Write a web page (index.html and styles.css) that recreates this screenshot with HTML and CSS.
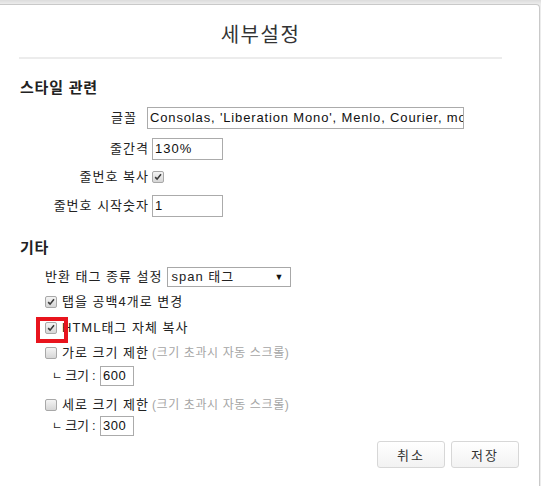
FILE: index.html
```html
<!DOCTYPE html>
<html lang="ko">
<head>
<meta charset="utf-8">
<title>세부설정</title>
<link rel="stylesheet" href="styles.css">
</head>
<body>
<div class="dialog">
  <div class="inner">
    <h1 class="title">세부설정</h1>
    <div class="rule"></div>

    <h2 class="heading">스타일 관련</h2>
    <div class="row row-font">
      <span class="label label-font">글꼴</span>
      <span class="input input-font">Consolas, 'Liberation Mono', Menlo, Courier, monospace</span>
    </div>
    <div class="row row-line">
      <span class="label">줄간격</span>
      <span class="input input-small">130%</span>
    </div>
    <div class="row row-copy">
      <span class="label">줄번호 복사</span>
      <span class="check checked"><svg viewBox="0 0 12 12" width="12" height="12"><path d="M2.6 6.2 L4.9 8.6 L9.6 2.8" fill="none" stroke="#3a3a3a" stroke-width="1.9"/></svg></span>
    </div>
    <div class="row row-start">
      <span class="label">줄번호 시작숫자</span>
      <span class="input input-small">1</span>
    </div>

    <h2 class="heading heading-etc">기타</h2>
    <div class="opts">
      <div class="opt opt-select">
        <span class="opt-label">반환 태그 종류 설정</span>
        <span class="select"><span>span 태그</span><span class="arrow">▼</span></span>
      </div>
      <div class="opt opt-tab">
        <span class="check checked"><svg viewBox="0 0 12 12" width="12" height="12"><path d="M2.6 6.2 L4.9 8.6 L9.6 2.8" fill="none" stroke="#3a3a3a" stroke-width="1.9"/></svg></span>
        <span class="opt-text">탭을 공백4개로 변경</span>
      </div>
      <div class="opt opt-html">
        <span class="check checked"><svg viewBox="0 0 12 12" width="12" height="12"><path d="M2.6 6.2 L4.9 8.6 L9.6 2.8" fill="none" stroke="#3a3a3a" stroke-width="1.9"/></svg></span>
        <span class="opt-text">HTML태그 자체 복사</span>
        <span class="highlight"></span>
      </div>
      <div class="opt opt-width">
        <span class="check"></span>
        <span class="opt-text">가로 크기 제한</span>
        <span class="hint">(크기 초과시 자동 스크롤)</span>
      </div>
      <div class="sub sub-width">
        <span class="sub-label"><span class="corner">ㄴ</span><span>크기</span><span>:</span></span>
        <span class="input input-size">600</span>
      </div>
      <div class="opt opt-height">
        <span class="check"></span>
        <span class="opt-text">세로 크기 제한</span>
        <span class="hint">(크기 초과시 자동 스크롤)</span>
      </div>
      <div class="sub sub-height">
        <span class="sub-label"><span class="corner">ㄴ</span><span>크기</span><span>:</span></span>
        <span class="input input-size">300</span>
      </div>
    </div>

    <div class="buttons">
      <span class="btn">취소</span>
      <span class="btn">저장</span>
    </div>
  </div>
</div>
</body>
</html>
```

FILE: styles.css
```css
html, body {
  margin: 0;
  padding: 0;
}
body {
  background: linear-gradient(#dcdcdc, #ececec 4px);
  font-family: "Liberation Sans", "Noto Sans CJK KR", sans-serif;
  color: #222;
  overflow: hidden;
  height: 486px;
  letter-spacing: 1px;
}
.dialog {
  position: relative;
  margin: 4px 0 0 -10px;
  width: 548px;
  height: 481px;
  background: #fff;
  border: 1px solid #c9c9c9;
  border-bottom: 0;
  border-radius: 4px 4px 0 0;
  box-sizing: content-box;
}
.inner {
  margin-left: 28px;
  width: 483px;
}
.title {
  margin: 15px 0 0;
  font-size: 20px;
  font-weight: normal;
  line-height: 30px;
  text-align: center;
  color: #333;
  letter-spacing: 1.5px;
}
.rule {
  margin-top: 7px;
  height: 2px;
  background: #ececec;
}
.heading {
  margin: 19px 0 0 1px;
  font-size: 15px;
  font-weight: bold;
  line-height: 20px;
  color: #222;
  letter-spacing: 0.8px;
}
.row {
  display: flex;
  align-items: center;
  height: 22px;
  font-size: 13px;
}
.row-font { margin-top: 9px; }
.row-line { margin-top: 9px; }
.row-copy { margin-top: 6px; }
.row-start { margin-top: 7px; }
.label {
  width: 130px;
  text-align: right;
  margin-right: 3px;
  line-height: 22px;
  white-space: nowrap;
}
.label-font {
  width: 118px;
  margin-right: 10px;
}
.input {
  box-sizing: border-box;
  height: 22px;
  border: 1px solid #ababab;
  padding: 0 2px;
  font-size: 13px;
  line-height: 20px;
  white-space: nowrap;
  overflow: hidden;
  color: #111;
  background: #fff;
}
.input-font {
  width: 317px;
  letter-spacing: 0.85px;
}
.input-small {
  width: 71px;
}
.check {
  box-sizing: border-box;
  display: inline-flex;
  align-items: center;
  justify-content: center;
  width: 12px;
  height: 12px;
  border: 1px solid #a8a8a8;
  border-radius: 2px;
  background: linear-gradient(#f4f4f4, #d6d6d6);
  flex: none;
}
.check svg {
  display: block;
}
.heading-etc {
  margin-top: 21px;
}
.opts {
  margin-left: 26px;
  font-size: 13px;
}
.opt {
  position: relative;
  display: flex;
  align-items: center;
  height: 20px;
  line-height: 20px;
  white-space: nowrap;
}
.opt-select {
  margin-top: 9px;
  height: 20px;
}
.opt-label {
  margin-right: 4px;
}
.select {
  box-sizing: border-box;
  display: flex;
  align-items: center;
  justify-content: space-between;
  width: 124px;
  height: 20px;
  border: 1px solid #a8a8a8;
  padding: 0 5px 0 4px;
  font-size: 13px;
  letter-spacing: 1px;
  line-height: 18px;
}
.arrow {
  font-size: 9px;
  color: #111;
}
.opt-tab { margin-top: 5px; }
.opt-html { margin-top: 6px; }
.opt-width { margin-top: 5px; }
.opt-height { margin-top: 9px; }
.opt-text {
  margin-left: 5px;
  color: #222;
}
.hint {
  margin-left: 3px;
  font-size: 12px;
  color: #a5a5a5;
  letter-spacing: 0.6px;
}
.highlight {
  position: absolute;
  left: -9px;
  top: -1px;
  width: 32px;
  height: 26px;
  box-sizing: border-box;
  border: 4px solid #e8141d;
}
.sub {
  display: flex;
  align-items: center;
  height: 20px;
  margin-left: 7px;
}
.sub-width { margin-top: 3px; }
.sub-height { margin-top: 1px; }
.sub-label {
  display: flex;
  align-items: center;
  gap: 3px;
  width: 48px;
  font-size: 13px;
  line-height: 20px;
  white-space: nowrap;
  letter-spacing: 0;
}
.corner {
  font-size: 11px;
  letter-spacing: 0;
}
.input-size {
  width: 34px;
  height: 20px;
  line-height: 18px;
  letter-spacing: 0.5px;
}
.buttons {
  display: flex;
  justify-content: flex-end;
  gap: 6px;
  margin-top: 5px;
  margin-right: -17px;
}
.btn {
  box-sizing: border-box;
  width: 68px;
  height: 27px;
  display: flex;
  align-items: center;
  justify-content: center;
  border: 1px solid #d7d7d7;
  border-radius: 3px;
  background: linear-gradient(#ffffff, #f2f2f2);
  font-size: 13px;
  color: #333;
  letter-spacing: 2px;
}
```
